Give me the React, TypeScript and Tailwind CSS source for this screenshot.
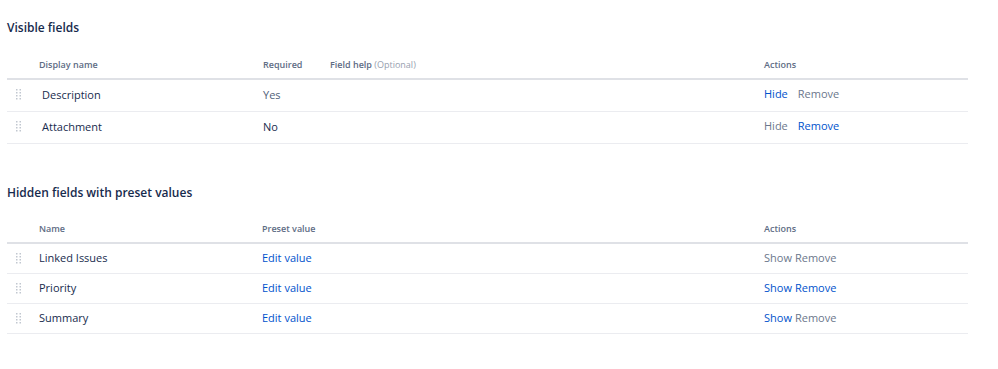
import React from 'react';

const font = { fontFamily: '"Open Sans", "Noto Sans", sans-serif' };

const DragHandle = () => (
  <svg width="6" height="11" viewBox="0 0 6 11" className="text-[#c1c7d0]">
    {[0, 3, 6, 9].map((y) => (
      <React.Fragment key={y}>
        <rect x="0" y={y} width="1.5" height="1.5" fill="currentColor" />
        <rect x="3.5" y={y} width="1.5" height="1.5" fill="currentColor" />
      </React.Fragment>
    ))}
  </svg>
);

const link = 'text-[#0052cc]';
const muted = 'text-[#6b778c]';

export default function App() {
  const visible = [
    { name: 'Description', required: 'Yes', hide: true },
    { name: 'Attachment', required: 'No', hide: false },
  ];
  const hidden = [
    { name: 'Linked Issues', show: false, remove: false },
    { name: 'Priority', show: true, remove: true },
    { name: 'Summary', show: true, remove: false },
  ];

  return (
    <div className="w-[998px] h-[369px] bg-white pl-[7px] text-[#172b4d]" style={font}>
      <div className="w-[961px]">
        <h2 className="pt-[19px] h-[51px] text-[12px] font-semibold leading-[18px]">Visible fields</h2>

        <div className="grid grid-cols-[32px_224px_67px_434px_1fr] items-center h-[29px] border-b-2 border-[#dfe1e6] text-[9px] font-semibold text-[#5e6c84]">
          <div />
          <div>Display name</div>
          <div>Required</div>
          <div>
            Field help <span className="font-normal text-[#97a0af]">(Optional)</span>
          </div>
          <div>Actions</div>
        </div>
        {visible.map((r) => (
          <div
            key={r.name}
            className="grid grid-cols-[32px_224px_67px_434px_1fr] items-center h-[32px] border-b border-[#ebecf0] text-[11px]"
          >
            <div className="pl-[9px] flex items-center -mt-[3px]">
              <DragHandle />
            </div>
            <div className="pl-[3px]">{r.name}</div>
            <div className={r.hide ? 'text-[#505f79]' : ''}>{r.required}</div>
            <div />
            <div className="flex gap-[10px] -mt-[2px]">
              <span className={r.hide ? link : muted}>Hide</span>
              <span className={r.hide ? muted : link}>Remove</span>
            </div>
          </div>
        ))}

        <h2 className="pt-[40px] h-[71px] text-[12px] font-semibold leading-[18px]">
          Hidden fields with preset values
        </h2>

        <div className="grid grid-cols-[32px_223px_502px_1fr] items-center h-[29px] border-b-2 border-[#dfe1e6] text-[9px] font-semibold text-[#5e6c84]">
          <div />
          <div>Name</div>
          <div>Preset value</div>
          <div>Actions</div>
        </div>
        {hidden.map((r) => (
          <div
            key={r.name}
            className="grid grid-cols-[32px_223px_502px_1fr] items-center h-[30px] border-b border-[#ebecf0] text-[11px]"
          >
            <div className="pl-[9px] flex items-center">
              <DragHandle />
            </div>
            <div>{r.name}</div>
            <div className={link}>Edit value</div>
            <div className="flex gap-[3px]">
              <span className={r.show ? link : muted}>Show</span>
              <span className={r.remove ? link : muted}>Remove</span>
            </div>
          </div>
        ))}
      </div>
    </div>
  );
}
